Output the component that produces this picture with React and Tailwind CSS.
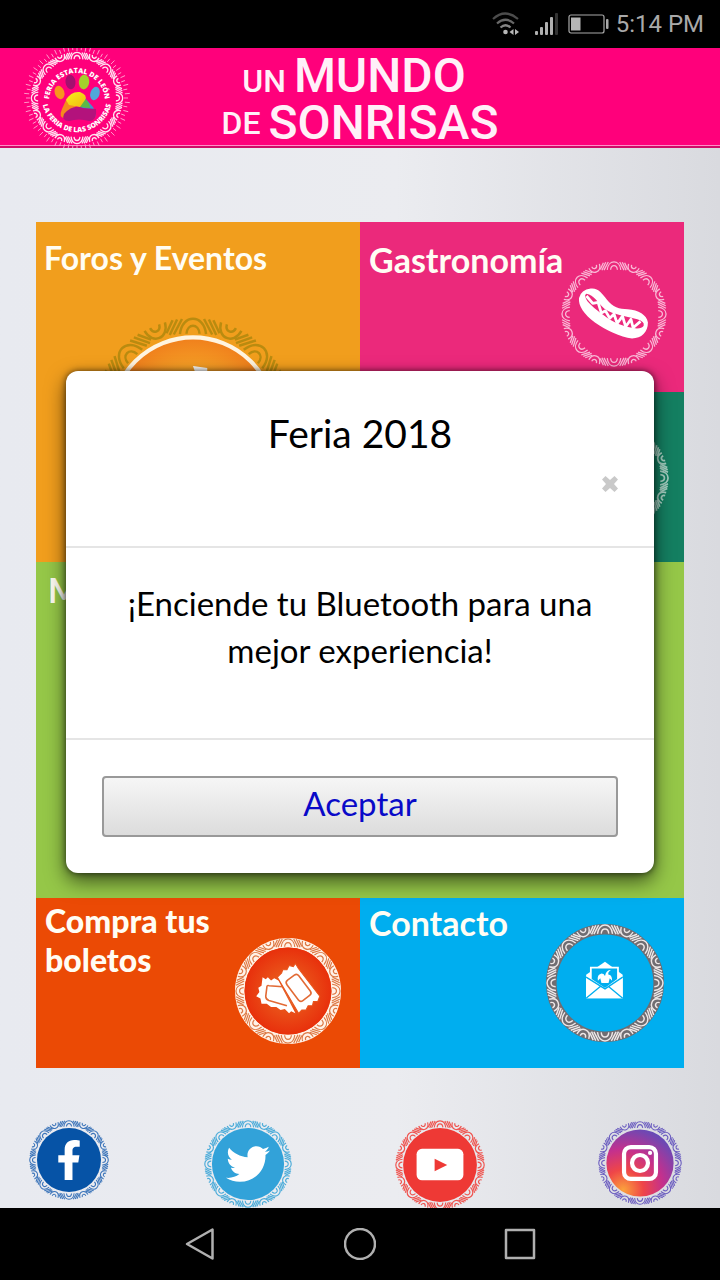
import { FaFacebookF, FaTwitter } from 'react-icons/fa';

const EIGHT = [0, 45, 90, 135, 180, 225, 270, 315];

// Band of arches and slashes, drawn in a 100 x 100 box around the origin
const Ornament = ({ color, strokeWidth = 1.3 }) => (
    <g fill="none" stroke={color} strokeWidth={strokeWidth}>
        {EIGHT.map((angle) => (
            <g key={angle} transform={`rotate(${angle})`}>
                <path d="M-6.4 -41.6 C-5.4 -51.6 5.4 -51.6 6.4 -41.6" />
                <path d="M-3.2 -41.8 C-2.8 -47 2.8 -47 3.2 -41.8" />
                <path d="M5.4 -49 L9.4 -41.4 M7.8 -48.8 L11.4 -41.2 M10 -48.4 L13 -42" />
                <path d="M-5.4 -49 L-9.4 -41.4 M-7.8 -48.8 L-11.4 -41.2 M-10 -48.4 L-13 -42" />
                <g transform="rotate(22.5)">
                    <path d="M-5.4 -49 C-4.4 -41 4.4 -41 5.4 -49" />
                    <path d="M-2.4 -49.2 C-2 -45.6 2 -45.6 2.4 -49.2" />
                </g>
            </g>
        ))}
    </g>
);

const Logo = () => (
    <svg viewBox="-54 -50 108 100" className="h-[100px] w-[108px] shrink-0" role="img" aria-label="Feria Estatal de León">
        <defs>
            <path id="logo-top" d="M-28 3 A28 28 0 0 1 28 3" />
            <path id="logo-bottom" d="M-34.5 5 A35 35 0 0 0 34.5 5" />
            <linearGradient id="pad" x1="0" y1="0" x2="1" y2="1">
                <stop offset="0" stopColor="#f6f01c" />
                <stop offset="1" stopColor="#f2b90f" />
            </linearGradient>
        </defs>
        <g stroke="#ffb3d6" strokeWidth="0.8">
            {Array.from({ length: 72 }, (_, i) => (
                <path key={i} d={i % 2 ? 'M0 -48 V-53' : 'M0 -47 V-51'} transform={`rotate(${i * 5})`} />
            ))}
        </g>
        <g transform="scale(0.93)">
            <Ornament color="#ffe3f1" strokeWidth={1.4} />
        </g>
        <g fill="#fff" fontFamily="'Open Sans', sans-serif" fontWeight="800" fontSize="7" textAnchor="middle">
            <text>
                <textPath href="#logo-top" startOffset="50%">FERIA ESTATAL DE LEÓN</textPath>
            </text>
            <text>
                <textPath href="#logo-bottom" startOffset="50%">LA FERIA DE LAS SONRISAS</textPath>
            </text>
        </g>
        <ellipse cx="-17.500" cy="-5.500" rx="4.800" ry="6.800" fill="#f7941e" transform="rotate(-18 -17.500 -5.500)" />
        <ellipse cx="-6.500" cy="-16" rx="5" ry="7.200" fill="#a3106f" transform="rotate(-6 -6.500 -16)" />
        <ellipse cx="7" cy="-16" rx="5.200" ry="7.400" fill="#a4cf2c" transform="rotate(6 7 -16)" />
        <ellipse cx="18" cy="-4.500" rx="4.600" ry="6.800" fill="#4fa9da" transform="rotate(18 18 -4.500)" />
        <path d="M-10 0 L-15 11 Q-19 20 -12 20 L0 10 Z" fill="#f58a1f" />
        <path d="M8 0 L16 9 Q20 16 18 19 L2 10 Z" fill="#3f92cf" />
        <path d="M7 0 Q13 5 13 10 L2 9 Z" fill="#5cb947" />
        <path d="M-13 16 Q-4 6 6 10 L19 11 Q20 23 12 23 Q2 20 -8 23 Q-16 23 -13 16Z" fill="#b3127c" />
        <path d="M-11 2 Q-6 -7 3 -6 Q11 -3 8 2 L3 9 L-8 7 Z" fill="url(#pad)" />
    </svg>
);

const StatusBar = () => (
    <div className="flex h-12 items-center justify-end gap-1.5 bg-black pr-4 text-[#a9a9a9]">
        <svg viewBox="0 0 28 24" className="h-6 w-7" fill="none" stroke="#4c4c4c" strokeWidth="2.200">
            <path d="M1 7 Q13 -4 26 7" />
            <path d="M5 11.500 Q13.500 4 22 11.500" stroke="#686868" />
            <path d="M8.500 15.500 Q13.500 11 18.500 15.500" stroke="#858585" />
            <circle cx="13.500" cy="20" r="2.300" fill="#b8b8b8" stroke="none" />
            <path d="M21.500 17 V23 L17.500 20Z M23 17 V23 L27 20Z" fill="#b8b8b8" stroke="none" />
        </svg>
        <svg viewBox="0 0 26 24" className="ml-2 h-6 w-[26px]" fill="#b0b0b0">
            <rect x="1" y="19" width="3" height="4" rx="1" />
            <rect x="6" y="15" width="3" height="8" rx="1" />
            <rect x="11" y="10" width="3" height="13" rx="1" />
            <rect x="16" y="5" width="3" height="18" rx="1" />
            <rect x="21" y="1" width="3" height="22" rx="1" fill="#333" />
        </svg>
        <svg viewBox="0 0 42 20" className="ml-0.5 h-5 w-[42px]">
            <rect x="1" y="1" width="35" height="18" rx="2" fill="none" stroke="#a9a9a9" strokeWidth="1.200" />
            <rect x="3" y="3.500" width="9.500" height="13" fill="#b5b5b5" />
            <rect x="38" y="5" width="2.500" height="10" rx="1" fill="#a9a9a9" />
        </svg>
        <span className="font-['Roboto',sans-serif] text-2xl leading-8">5:14 PM</span>
    </div>
);

const Header = () => (
    <header className="flex h-[100px] items-start border-b-2 border-[#d10a68] bg-[#ff007b] shadow-[inset_0_-1px_0_#ff8fc6]">
        <div className="w-[140px] shrink-0 pl-[23px]">
            <Logo />
        </div>
        <h1 className="flex-1 pt-1 font-['Roboto',sans-serif] text-5xl leading-[47px] font-medium text-[#fff0f8]">
            <span className="flex items-baseline justify-center gap-2 pr-3">
                <span className="text-[32px] leading-8">UN</span>
                <span>MUNDO</span>
            </span>
            <span className="flex items-center justify-center gap-2">
                <span className="text-[32px] leading-8">DE</span>
                <span>SONRISAS</span>
            </span>
        </h1>
        <div className="w-[140px] shrink-0" />
    </header>
);

const HotDog = () => (
    <svg viewBox="-50 -50 100 100" className="mt-[39px] mr-[17px] size-[106px] shrink-0">
        <Ornament color="#f9b9d6" strokeWidth={1.2} />
        <path d="M-22 -24 C-15 -25 -11 -19 -7 -14 C-1 -6 5 -5 13 -4.500 C23 -4 31 1 32 8 C32 17 26 23 17 23 C6 22 -8 15 -18 8 C-28 1 -34 -8 -33 -15 Q-31 -23 -22 -24Z" fill="#fff" />
        <path d="M-26 -19 C-19 -18 -15 -10 -9 -5 C0 1 12 2 22 5 Q29 7 28 11 Q26 14 20 13.500 C8 12 -3 7 -10 1 C-18 -5 -26 -11 -27 -16 Q-28 -18 -26 -19Z" fill="#ec297b" />
        <path d="M-26 -17 L-20 -10 L-15 -11 L-12 -1 L-8 -3 L-4 4 L0 0 L3 9 L8 2 L11 12 L16 5 L18 13 L25 7" fill="none" stroke="#fff" strokeWidth="2.600" strokeLinejoin="round" />
    </svg>
);

const Tickets = () => (
    <svg viewBox="-50 -50 100 100" className="mt-10 mr-[19px] size-[106px] shrink-0">
        <defs>
            <radialGradient id="ticket-bg">
                <stop offset="0.3" stopColor="#ea5a1c" />
                <stop offset="1" stopColor="#e8300c" />
            </radialGradient>
        </defs>
        <circle r="45.500" fill="none" stroke="#fff2e8" strokeWidth="9" />
        <Ornament color="#dd7844" strokeWidth={1.1} />
        <circle r="41" fill="url(#ticket-bg)" />
        <path d="M-24 -13 L-21 -11 L-19 -13 L-16 -10 L-13 -12 L-9 -10 L7 21 L3 19 L1 21 L-3 17 L-7 18 L-11 15 L-16 15 L-20 12 L-25 12 L-26 7 L-30 5 L-27 1 L-28 -3 L-25 -5Z" fill="#fff" />
        <path d="M-18 -5 Q-20 -6 -20 -3 L-21 5 Q-21 8 -18 9 L-1 14 M-18 -5 L-5 -4 L5 13" fill="none" stroke="#e26a35" strokeWidth="1.500" />
        <path d="M-10 -13 L-6 -17 L-5 -20 L-1 -20 L1 -24 L5 -23 L7 -26 L10 -21 L30 5 L28 10 L24 10 L23 14 L19 14 L17 18 L13 18 L10 21Z" fill="#fff" stroke="#e8541c" strokeWidth="1" />
        <rect x="-7" y="-12" width="14" height="24" rx="3" transform="translate(10 -3) rotate(-37)" fill="none" stroke="#e26a35" strokeWidth="1.500" />
    </svg>
);

const Envelope = () => (
    <svg viewBox="-50 -50 100 100" className="mt-[26px] mr-5 size-[118px] shrink-0">
        <circle r="45.500" fill="none" stroke="#706d72" strokeWidth="9" />
        <Ornament color="#eee8e8" strokeWidth={1.2} />
        <path d="M-16 -7 L0 -18 L15 -7 V13 H-16Z" fill="#fff" />
        <path d="M-12 -13 H11 V-3 L0 5 L-12 -3Z" fill="#00aeef" stroke="#fff" strokeWidth="1.500" />
        <path d="M-16 -5 L0 5 L15 -5 V13 H-16Z" fill="#fff" />
        <path d="M-16 13 L-4 3 M15 13 L3 3 M-16 -5 L0 5 L15 -5" fill="none" stroke="#00aeef" strokeWidth="1.100" />
        <path d="M-6 -2 Q-7 -7 -3 -8 Q-1 -8 0 -6 Q1 -11 5 -11 Q2 -9 3 -7 Q6 -7 6 -2 L4 -4 L3 0 H-3 L-4 -4Z" fill="#fff" />
    </svg>
);

const Tiles = () => (
    <nav className="mx-9 mt-[74px] grid grid-cols-2 grid-rows-[170px_170px_336px_170px] font-['Lato',sans-serif] text-[34px] leading-[39px] font-bold text-[#fffdf4]">
        <a href="#foros" className="row-span-2 flex flex-col overflow-hidden bg-[#f19e1d] pt-4 pl-2 text-[32px] leading-[39px]">
            Foros y Eventos
            <svg viewBox="-50 -50 100 100" className="mt-10 ml-[47px] size-[204px] shrink-0">
                <defs>
                    <radialGradient id="foros-bg">
                        <stop offset="0.6" stopColor="#f5a126" />
                        <stop offset="1" stopColor="#f07f1c" />
                    </radialGradient>
                </defs>
                <Ornament color="#b98b10" strokeWidth={1.2} />
                <circle r="40" fill="url(#foros-bg)" stroke="#fff4e0" strokeWidth="2" />
                <path d="M0 -26 L1 -23 L7 -23 V-25Z" fill="#fff" />
            </svg>
        </a>
        <a href="#gastronomia" className="flex justify-between bg-[#eb297b]">
            <span className="w-0 pt-[18px] pl-[9px] whitespace-nowrap">Gastronomía</span>
            <HotDog />
        </a>
        <a href="#mapa" aria-label="Mapa" className="flex justify-end bg-[#147f61]">
            <svg viewBox="-50 -50 100 100" className="mt-[33px] mr-[15px] size-[106px] shrink-0">
                <Ornament color="#a6cfc1" strokeWidth={1.600} />
            </svg>
        </a>
        <a href="#mas" className="col-span-2 bg-[#95c748] pt-2 pl-3">M</a>
        <a href="#boletos" className="flex justify-between bg-[#eb4a05]">
            <span className="w-[190px] pt-[3px] pl-[9px] text-[32px] leading-[39px] font-black">Compra tus boletos</span>
            <Tickets />
        </a>
        <a href="#contacto" className="flex justify-between bg-[#00aeef]">
            <span className="w-0 pt-[5px] pl-[9px] whitespace-nowrap">Contacto</span>
            <Envelope />
        </a>
    </nav>
);

const Socials = () => (
    <div className="mt-[52px] grid h-[88px] grid-cols-[175fr_191fr_203fr_86fr] pr-9 pl-[29px]">
        <a href="#facebook" aria-label="Facebook" className="relative size-20 rounded-full">
            <svg viewBox="-50 -50 100 100" className="size-20">
                <Ornament color="#3b74b9" />
                <circle r="40" fill="#0653a6" />
            </svg>
            <FaFacebookF className="absolute inset-0 m-auto size-10 text-white" />
        </a>
        <a href="#twitter" aria-label="Twitter" className="relative size-[88px] rounded-full">
            <svg viewBox="-50 -50 100 100" className="size-[88px]">
                <Ornament color="#4cacd9" />
                <circle r="41" fill="#32a2d9" />
            </svg>
            <FaTwitter className="absolute inset-0 m-auto size-11 text-white" />
        </a>
        <a href="#youtube" aria-label="YouTube" className="size-[90px] rounded-full">
            <svg viewBox="-50 -50 100 100" className="size-[90px]">
                <Ornament color="#ef5550" />
                <circle r="41" fill="#ee3935" />
                <rect x="-26" y="-18" width="52" height="35" rx="6" fill="#fff" />
                <path d="M-6 -7 L8 0 L-6 7Z" fill="#ee3935" />
            </svg>
        </a>
        <a href="#instagram" aria-label="Instagram" className="size-[84px] rounded-full pt-px">
            <svg viewBox="-50 -50 100 100" className="size-[84px]">
                <defs>
                    <radialGradient id="insta" cx="0.25" cy="0.9" r="1">
                        <stop offset="0" stopColor="#fba23c" />
                        <stop offset="0.3" stopColor="#ef4648" />
                        <stop offset="0.6" stopColor="#c4308d" />
                        <stop offset="1" stopColor="#5c4dbb" />
                    </radialGradient>
                </defs>
                <Ornament color="#6d5fc0" />
                <circle r="40" fill="url(#insta)" />
                <rect x="-19" y="-19" width="38" height="38" rx="8" fill="none" stroke="#fff" strokeWidth="5" />
                <circle r="9.500" fill="none" stroke="#fff" strokeWidth="5" />
                <circle cx="12" cy="-12" r="2.500" fill="#fff" />
            </svg>
        </a>
    </div>
);

const BluetoothDialog = () => (
    <div className="absolute inset-0 px-[66px] pt-[371px]">
        <div
            role="dialog"
            aria-labelledby="dialog-title"
            className="flex flex-col rounded-xl bg-white font-['Lato',sans-serif] text-black shadow-[0_8px_20px_rgba(0,0,0,0.6),0_0_6px_rgba(0,0,0,0.6)]"
        >
            <div className="flex h-[177px] flex-col border-b-2 border-[#e5e5e5] px-9 pt-9">
                <h2 id="dialog-title" className="text-center text-[39px] leading-[52px]">Feria 2018</h2>
                <button type="button" aria-label="Cerrar" className="mt-[17px] self-end">
                    <svg viewBox="0 0 16 16" className="size-4" fill="#c9c9c9">
                        <path d="M3.500 0 L8 4 L12.500 0 L16 3.500 L12 8 L16 12.500 L12.500 16 L8 12 L3.500 16 L0 12.500 L4 8 L0 3.500Z" />
                    </svg>
                </button>
            </div>
            <p className="h-48 border-b-2 border-[#e5e5e5] px-9 pt-8 text-center text-[33px] leading-[47px]">
                ¡Enciende tu Bluetooth para una mejor experiencia!
            </p>
            <div className="flex p-9">
                <button
                    type="button"
                    className="h-[61px] flex-1 rounded-[4px] border-2 border-[#999] bg-linear-to-b from-[#f6f6f6] to-[#dcdcdc] pb-2 text-[33px] leading-10 text-[#0909c8]"
                >
                    Aceptar
                </button>
            </div>
        </div>
    </div>
);

const NavBar = () => (
    <div className="flex h-[72px] items-center justify-center gap-32 bg-black">
        <button type="button" aria-label="Atrás">
            <svg viewBox="0 0 32 32" className="size-8" fill="none" stroke="#b0b0b0" strokeWidth="2.500" strokeLinejoin="round">
                <path d="M3 16 L28.500 1.500 V30.500 Z" />
            </svg>
        </button>
        <button type="button" aria-label="Inicio">
            <svg viewBox="0 0 32 32" className="size-8" fill="none" stroke="#b0b0b0" strokeWidth="2.500">
                <circle cx="16" cy="16" r="15" />
            </svg>
        </button>
        <button type="button" aria-label="Recientes">
            <svg viewBox="0 0 32 32" className="size-8" fill="none" stroke="#b0b0b0" strokeWidth="2.500" strokeLinejoin="round">
                <rect x="2" y="2" width="28" height="28" />
            </svg>
        </button>
    </div>
);

const App = () => (
    <div className="relative flex min-h-screen flex-col">
        <StatusBar />
        <Header />
        <main className="flex-1 bg-linear-to-r from-[#e8eaf0] via-[#ebecf0] via-55% to-[#d9dadf]">
            <Tiles />
            <Socials />
        </main>
        <NavBar />
        <BluetoothDialog />
    </div>
);

export default App;
